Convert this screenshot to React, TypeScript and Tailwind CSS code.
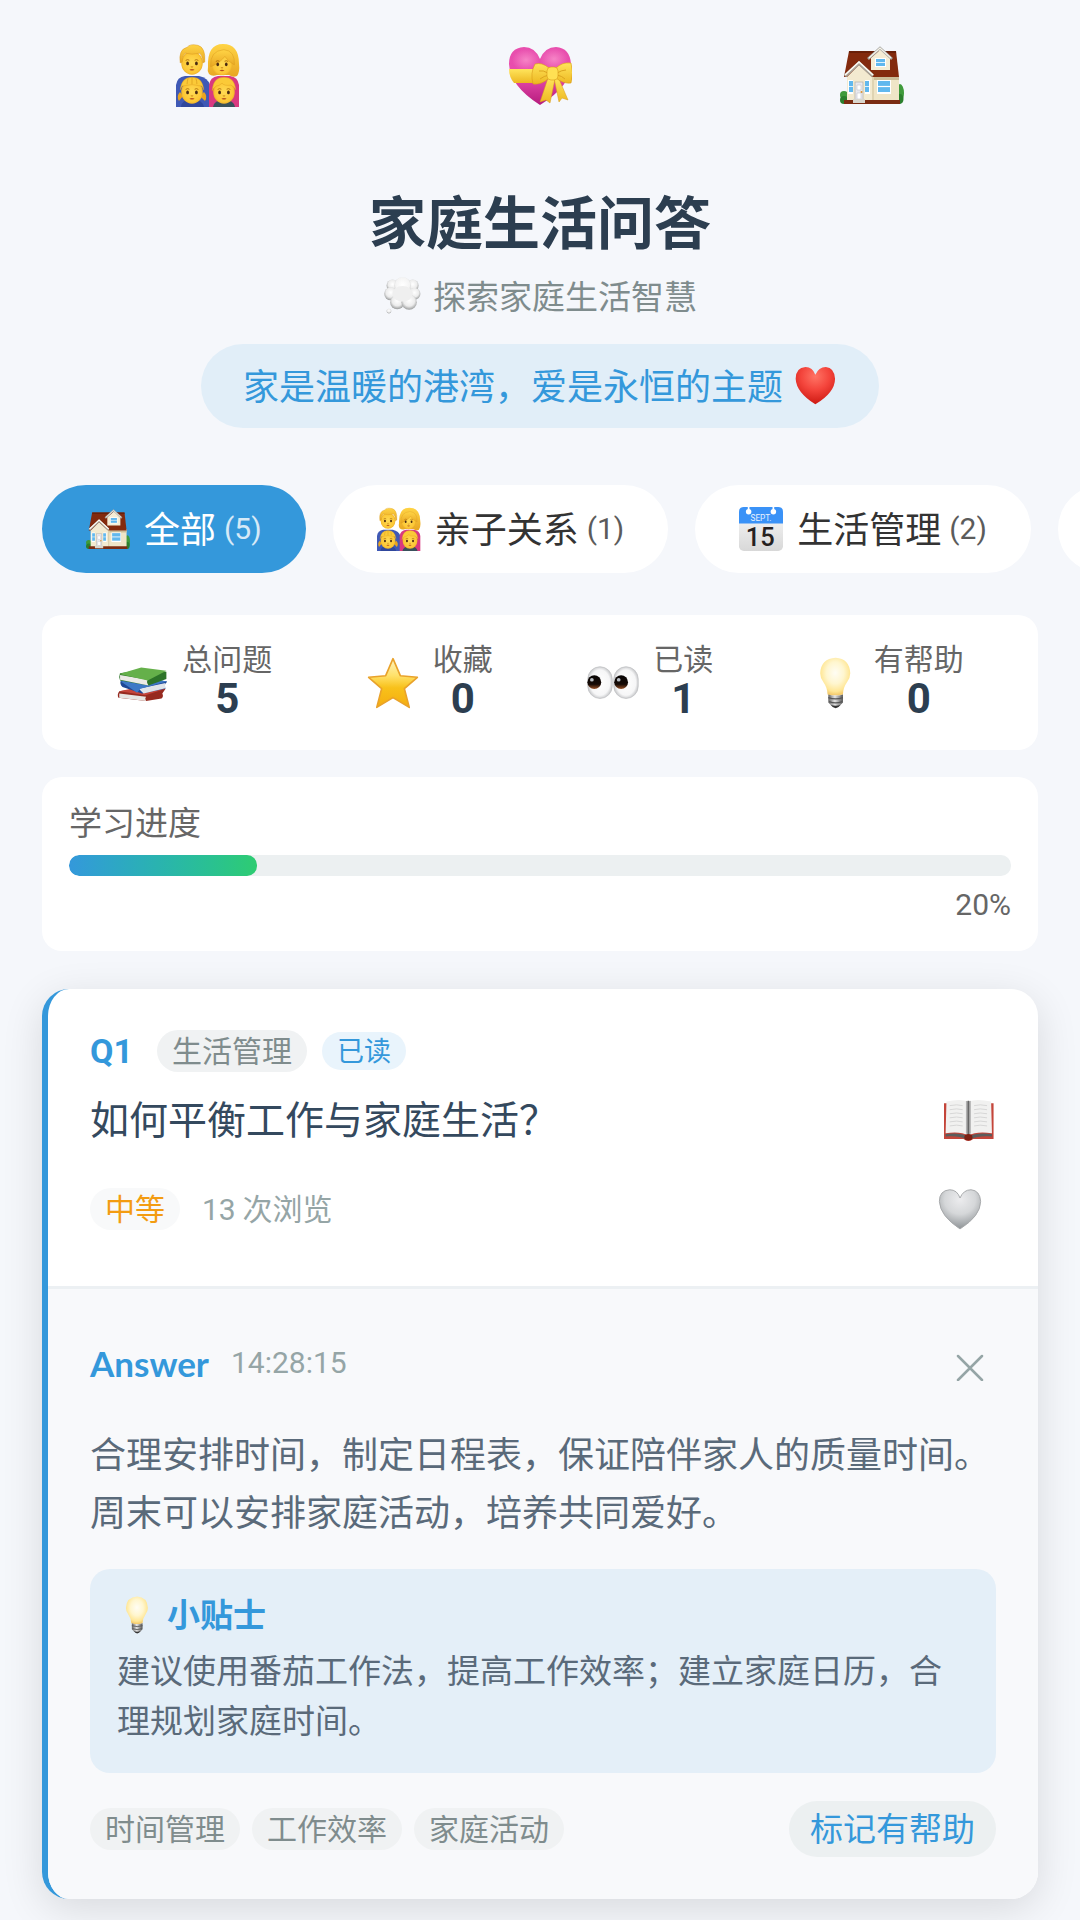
import { useState } from 'react';
import type { ReactNode } from 'react';

type IconProps = { className?: string };

function Face({ x, y, s, children }: { x: number; y: number; s: number; children?: ReactNode }) {
  return (
    <g transform={`translate(${x} ${y}) scale(${s})`}>
      <ellipse cx="0" cy="1" rx="11" ry="12" fill="url(#skin)" />
      {children}
      <ellipse cx="-4.5" cy="1.500" rx="1.400" ry="1.900" fill="#4a2b12" />
      <ellipse cx="4.5" cy="1.500" rx="1.400" ry="1.900" fill="#4a2b12" />
      <path d="M-6.5-1.6q2-1.5 3.8-.2M6.5-1.6q-2-1.5-3.8-.2" stroke="#a8690b" strokeWidth=".9" fill="none" />
      <path d="M-1.2 4.8q1.2.8 2.4 0" stroke="#c98413" strokeWidth="1" fill="none" />
      <path d="M-2.600 7.600q2.600-1 5.200 0q-2.600 2.400-5.200 0z" fill="#b8501c" />
    </g>
  );
}

function FamilyIcon({ className }: IconProps) {
  return (
    <svg viewBox="0 0 64 64" className={className} aria-hidden="true">
      <defs>
        <radialGradient id="skin" cx=".5" cy=".5" r=".6">
          <stop offset="0" stopColor="#ffdb55" />
          <stop offset=".7" stopColor="#fcc735" />
          <stop offset="1" stopColor="#dc981d" />
        </radialGradient>
        <linearGradient id="hair" x1="0" y1="0" x2="0" y2="1">
          <stop offset="0" stopColor="#ffd445" />
          <stop offset="1" stopColor="#e8a622" />
        </linearGradient>
      </defs>
      <path d="M0 64V42q1-8 9-9h14q9 2 11 9v22z" fill="#3f59b5" />
      <path d="M33 64V42q1-8 9-9h12q8 1 9 9v22z" fill="#d93a80" />
      <path d="M32 24Q31 1 47 1q16 0 16 20 1 8-2 12-4 2-8-1H41q-5 2-8-1-2-3-1-7z" fill="url(#hair)" />
      <Face x={46} y={20} s={0.95}>
        <path d="M-12 4Q-13-13 2-14q12 1 11 16Q7-1 3-7q-5 7-15 11z" fill="url(#hair)" stroke="#d9991c" strokeWidth=".5" />
      </Face>
      <Face x={16} y={19} s={0.98}>
        <path d="M-12 1Q-14-13-5-15q3-4 11-2 8 2 7 17l-2 1q0-7-3-10-8 2-15 0-3 3-3 9z" fill="url(#hair)" stroke="#d9991c" strokeWidth=".5" />
      </Face>
      <path d="M5 64q1-8 11-8t12 8z" fill="#2f479c" />
      <path d="M37 64q1-7 11-7t11 7z" fill="#39515c" />
      <path d="M4 49q-4 4-1 9l4-5zM28 49q4 4 1 9l-5-5z" fill="#eaa51e" />
      <Face x={16} y={48} s={0.98}>
        <path d="M-12-1Q-11-14 0-14q11 0 12 13l-2-4Q0-8-10-5z" fill="#fbca38" stroke="#d9991c" strokeWidth=".4" />
        <path d="M-4-13q-1 3-1 6M0-14v7M4-13q1 3 1 6" stroke="#d99a1c" strokeWidth=".7" fill="none" />
      </Face>
      <Face x={48} y={48} s={0.98}>
        <path d="M-12-1Q-11-14 0-14q11 0 12 13-2-4-5-5-7 1-9-2-3 3-6 3-3 2-4 5z" fill="#fbca38" stroke="#d9991c" strokeWidth=".4" />
      </Face>
    </svg>
  );
}

function GiftHeartIcon({ className }: IconProps) {
  return (
    <svg viewBox="0 0 64 64" className={className} aria-hidden="true">
      <defs>
        <linearGradient id="pinkHeart" x1="0" y1="0" x2="0" y2="1">
          <stop offset="0" stopColor="#e84fae" />
          <stop offset=".5" stopColor="#e84cad" />
          <stop offset="1" stopColor="#b51b7d" />
        </linearGradient>
        <radialGradient id="pinkShine">
          <stop offset="0" stopColor="#f684c6" />
          <stop offset="1" stopColor="#f684c6" stopOpacity="0" />
        </radialGradient>
        <linearGradient id="ribbon" x1="0" y1="0" x2="0" y2="1">
          <stop offset="0" stopColor="#ffe55c" />
          <stop offset="1" stopColor="#edb721" />
        </linearGradient>
      </defs>
      <path d="M32 62Q2 43 1 21 1 5 16 4q11 0 16 12Q37 4 48 4q14 1 15 17 0 22-31 41z" fill="url(#pinkHeart)" />
      <ellipse cx="18" cy="17" rx="14" ry="11" fill="url(#pinkShine)" />
      <ellipse cx="46" cy="16" rx="14" ry="11" fill="url(#pinkShine)" />
      <path d="M1 26h26v14H6Q1 34 1 26z" fill="url(#ribbon)" />
      <path d="M40 35l-8 24 6-2 4 3 5-24zM46 35l5 24 3-4 6 2-9-21z" fill="url(#ribbon)" stroke="#d99a18" strokeWidth=".5" />
      <path d="M41 25Q34 19 27 21q-5 9-2 20 9 1 16-6zM48 25q6-6 15-5 3 9 0 20-8 1-15-5z" fill="url(#ribbon)" stroke="#d99a18" strokeWidth=".6" />
      <path d="M40 30q-5-3-9-2M41 32q-5 1-9 4M49 30q5-3 9-3M49 32q5 1 8 4" stroke="#dda51f" strokeWidth="1" fill="none" />
      <rect x="39" y="24" width="11" height="13" rx="4" fill="#ffe053" stroke="#d99a18" strokeWidth=".6" />
    </svg>
  );
}

function HouseIcon({ className }: IconProps) {
  return (
    <svg viewBox="0 -2 64 64" className={className} aria-hidden="true">
      <circle cx="4" cy="50" r="4" fill="#3f9a3b" />
      <circle cx="4" cy="55" r="4" fill="#2b7f2d" />
      <ellipse cx="60" cy="48" rx="4" ry="9" fill="#3f9a3b" />
      <ellipse cx="60" cy="54" rx="3.500" ry="5" fill="#2b7f2d" />
      <path d="M7 30h52v29H7z" fill="#efe5c7" />
      <path d="M34 32h25v3H34z" fill="#cbbd98" />
      <path d="M9 6h47l3 26H4z" fill="#832a0d" />
      <path d="M9 6h47v2H9z" fill="#692009" />
      <path d="M31 13l10-9 9 9v12H31z" fill="#f5edd5" />
      <path d="M28 14L40 3l12 11" fill="none" stroke="#a9a9a4" strokeWidth="2.600" />
      <path d="M29 13L40 3l11 10" fill="none" stroke="#f7f4ea" strokeWidth="1.200" />
      <path d="M35 13h11v9H35z" fill="#fff" />
      <path d="M36 14h9v7h-9z" fill="#61b8ee" />
      <path d="M36 17.500h9" stroke="#fff" strokeWidth=".8" />
      <path d="M7 32l12-12 13 12v27H7z" fill="#f3ead0" />
      <path d="M5 31l14-13 14 13" fill="none" stroke="#aaa69b" strokeWidth="3.200" />
      <path d="M5 30l14-13 14 13" fill="none" stroke="#fffdf5" strokeWidth="1.600" />
      <path d="M33 32v26" stroke="#cfc29d" strokeWidth="1" />
      <path d="M8 35h5v14H8zM25 35h5v14h-5z" fill="#fff" />
      <path d="M9 36h4v11H9zM25 36h4v11h-4z" fill="#61b8ee" />
      <path d="M9 41.500h4M25 41.500h4" stroke="#fff" strokeWidth=".8" />
      <rect x="15" y="37" width="8" height="21" fill="#e9e9ee" stroke="#b7b4ad" strokeWidth=".8" />
      <path d="M17 40h4v5h-4zM17 48h4v6h-4z" fill="#fff" stroke="#c3c3cb" strokeWidth=".6" />
      <circle cx="21.500" cy="47" r="1" fill="#d9902e" />
      <path d="M37 35h14v14H37z" fill="#fff" />
      <path d="M38 36h12v11H38z" fill="#61b8ee" />
      <path d="M38 41.500h12" stroke="#fff" strokeWidth="1.200" />
      <path d="M4 55h56v4H4z" fill="#7a2c12" />
      <path d="M13 54h12v4H13z" fill="#d9d6cd" />
    </svg>
  );
}

function ThoughtIcon({ className }: IconProps) {
  return (
    <svg viewBox="0 0 64 64" className={className} aria-hidden="true">
      <defs>
        <radialGradient id="cloud" cx=".5" cy=".4" r=".6">
          <stop offset="0" stopColor="#ffffff" />
          <stop offset=".6" stopColor="#ececec" />
          <stop offset="1" stopColor="#989a9a" />
        </radialGradient>
        <radialGradient id="cloudTop" cx=".5" cy=".45" r=".6">
          <stop offset="0" stopColor="#ffffff" />
          <stop offset=".7" stopColor="#f4f4f4" />
          <stop offset="1" stopColor="#c3c4c4" />
        </radialGradient>
      </defs>
      <g fill="url(#cloud)">
        <circle cx="16" cy="16" r="10" />
        <circle cx="50" cy="16" r="10" />
        <circle cx="13" cy="30" r="11" />
        <circle cx="53" cy="30" r="10" />
        <circle cx="24" cy="44" r="12" />
        <circle cx="44" cy="44" r="13" />
      </g>
      <circle cx="33" cy="16" r="14" fill="url(#cloudTop)" />
      <ellipse cx="33" cy="30" rx="17" ry="13" fill="#efefef" />
      <circle cx="10" cy="59" r="4" fill="url(#cloud)" />
    </svg>
  );
}

function RedHeartIcon({ className }: IconProps) {
  return (
    <svg viewBox="0 0 64 64" className={className} aria-hidden="true">
      <defs>
        <radialGradient id="redHeart" cx=".5" cy=".25" r=".8">
          <stop offset="0" stopColor="#ff7465" />
          <stop offset=".45" stopColor="#f4453c" />
          <stop offset="1" stopColor="#c8130c" />
        </radialGradient>
      </defs>
      <path d="M31 63Q2 45 1 24 1 7 16 6q11 0 15 12Q36 6 47 6q13 1 14 18 0 21-30 39z" fill="url(#redHeart)" />
    </svg>
  );
}

function WhiteHeartIcon({ className }: IconProps) {
  return (
    <svg viewBox="0 0 64 64" className={className} aria-hidden="true">
      <defs>
        <radialGradient id="whiteHeart" cx=".5" cy=".25" r=".75">
          <stop offset="0" stopColor="#ececee" />
          <stop offset=".5" stopColor="#d5d7d9" />
          <stop offset="1" stopColor="#8e9396" />
        </radialGradient>
      </defs>
      <path d="M32 61Q3 42 2 21 2 5 17 4q11 0 15 12Q37 4 48 4q13 1 14 17 0 21-30 40z" fill="url(#whiteHeart)" stroke="#a5a8aa" strokeWidth="1.400" />
    </svg>
  );
}

function CalendarIcon({ className }: IconProps) {
  return (
    <svg viewBox="0 0 64 64" className={className} aria-hidden="true">
      <defs>
        <linearGradient id="paper" x1="0" y1="0" x2="0" y2="1">
          <stop offset="0" stopColor="#fafafa" />
          <stop offset="1" stopColor="#d8d8d8" />
        </linearGradient>
      </defs>
      <rect x="0" y="0" width="64" height="64" rx="7" fill="url(#paper)" />
      <path d="M0 24V7q0-7 7-7h50q7 0 7 7v17z" fill="#3a92f7" />
      <circle cx="14" cy="7" r="4" fill="#fff" />
      <circle cx="50" cy="7" r="4" fill="#fff" />
      <path d="M14 0v7M50 0v7" stroke="#fff" strokeWidth="2.500" />
      <text x="32" y="21" textAnchor="middle" fontSize="12" fill="#e8f3ff" fontFamily="Roboto, sans-serif">SEPT.</text>
      <text x="31" y="56" textAnchor="middle" fontSize="37" fontWeight="500" fill="#26211f" fontFamily="Roboto, sans-serif">15</text>
    </svg>
  );
}

function BooksIcon({ className }: IconProps) {
  return (
    <svg viewBox="-1 0 64 64" className={className} aria-hidden="true">
      <path d="M3 42l29-4 28 1-4 6q2 4-1 6L36 54 2 50q-2-4 1-8z" fill="#962a20" />
      <path d="M3 45l33 4q-2 2 0 5L3 50z" fill="#e7e5e2" />
      <path d="M3 42l32 5 25-8-28-3z" fill="#c5443a" />
      <path d="M5 29l29-3 28 4-3 4q-1 3 1 5l-29 6L7 37q-4-4-2-8z" fill="#1e4795" />
      <path d="M27 39l33-7q-2 3 1 6l-28 7z" fill="#dfe4ea" />
      <path d="M5 30l20 14 4-5 33-9-28-5z" fill="#3d78c6" />
      <path d="M4 20l29-5 28 3v9L39 35 4 29q-2-5 0-9z" fill="#2d7429" />
      <path d="M4 22l34 6q-2 3 1 7L4 28z" fill="#eceae6" />
      <path d="M3 21l27-8 31 4-23 12z" fill="#65b04a" />
    </svg>
  );
}

function StarIcon({ className }: IconProps) {
  return (
    <svg viewBox="0 0 64 64" className={className} aria-hidden="true">
      <defs>
        <linearGradient id="star" x1="0" y1="0" x2="0" y2="1">
          <stop offset="0" stopColor="#fff3c0" />
          <stop offset=".35" stopColor="#ffe169" />
          <stop offset=".6" stopColor="#f8c11a" />
          <stop offset="1" stopColor="#f5ad10" />
        </linearGradient>
      </defs>
      <path d="M32 2l9 21 21 2-16 14 6 23-20-12-20 12 6-23L2 25l21-2z" fill="url(#star)" stroke="#e9a22b" strokeWidth="2" strokeLinejoin="round" />
    </svg>
  );
}

function EyesIcon({ className }: IconProps) {
  return (
    <svg viewBox="0 0 64 64" className={className} aria-hidden="true">
      <defs>
        <radialGradient id="eyeball" cx=".5" cy=".5" r=".5">
          <stop offset="0" stopColor="#ffffff" />
          <stop offset=".8" stopColor="#f6f6f7" />
          <stop offset="1" stopColor="#cfd0d2" />
        </radialGradient>
        <linearGradient id="iris" x1="0" y1="0" x2="0" y2="1">
          <stop offset="0" stopColor="#080504" />
          <stop offset=".65" stopColor="#150a06" />
          <stop offset="1" stopColor="#9a5227" />
        </linearGradient>
      </defs>
      <rect x="1" y="12" width="30" height="39" rx="15" fill="url(#eyeball)" stroke="#c2c3c5" strokeWidth="1" />
      <rect x="33" y="12" width="30" height="39" rx="15" fill="url(#eyeball)" stroke="#c2c3c5" strokeWidth="1" />
      <circle cx="9" cy="31" r="8.500" fill="url(#iris)" />
      <circle cx="42" cy="31" r="8.500" fill="url(#iris)" />
      <circle cx="6" cy="28" r="2.300" fill="#b8bec4" />
      <circle cx="39" cy="28" r="2.300" fill="#b8bec4" />
    </svg>
  );
}

function BulbIcon({ className }: IconProps) {
  return (
    <svg viewBox="-1 0 64 64" className={className} aria-hidden="true">
      <defs>
        <radialGradient id="glow" cx=".5" cy=".4" r=".58">
          <stop offset="0" stopColor="#fffdf4" />
          <stop offset=".5" stopColor="#fff6cf" />
          <stop offset=".85" stopColor="#ffe694" />
          <stop offset="1" stopColor="#f4cc70" />
        </radialGradient>
        <linearGradient id="socket" x1="0" y1="0" x2="1" y2="0">
          <stop offset="0" stopColor="#626262" />
          <stop offset=".45" stopColor="#e4e4e4" />
          <stop offset="1" stopColor="#555555" />
        </linearGradient>
      </defs>
      <path d="M23 46Q23 38 18 31q-4-5-4-11Q15 2 33 1q17 1 18 19 0 6-4 11-5 7-5 15-10 3-19 0z" fill="url(#glow)" />
      <path d="M24 46q9 3 18 0v10l-4 4q-5 5-10 0l-4-4z" fill="url(#socket)" />
      <path d="M24 50q9 3 18 0M25 55q8 3 16 0" stroke="#565656" strokeWidth="1.500" fill="none" />
      <path d="M27 59q6 2 12 0-6 8-12 0z" fill="#333" />
    </svg>
  );
}

function OpenBookIcon({ className }: IconProps) {
  return (
    <svg viewBox="2 -6 64 64" className={className} aria-hidden="true">
      <path d="M2 9h61v44H38q-6 5-12 0H1z" fill="#c4453a" />
      <path d="M4 47q18-2 28 3 10-5 29-3v3q-18-1-25 3h-8q-6-4-24-3z" fill="#5c5c5c" />
      <path d="M5 7q17-4 27 0v42q-10-6-28-3z" fill="#f1f1f0" />
      <path d="M60 7q-18-4-28 0v42q10-6 29-3z" fill="#f1f1f0" />
      <path d="M29 6l3 1 3-1v40l-3 3-3-3z" fill="#b0b0b0" />
      <path d="M32 6v43" stroke="#666" strokeWidth="2" />
      <path d="M9 12q9-2 16 0M9 17q9-2 16 0M9 22q9-2 16 0M9 27q9-2 16 0M9 32q9-2 16 0M9 37q9-2 16 0M39 12q7-2 16 0M39 17q7-2 16 0M39 22q7-2 16 0M39 27q7-2 16 0M39 32q7-2 16 0M39 37q7-2 16 0" stroke="#d6d6d6" strokeWidth="1.200" fill="none" />
      <ellipse cx="32" cy="51" rx="5" ry="4" fill="#7d1f12" />
    </svg>
  );
}

const categories = [
  { name: '全部', count: 5, Icon: HouseIcon },
  { name: '亲子关系', count: 1, Icon: FamilyIcon },
  { name: '生活管理', count: 2, Icon: CalendarIcon },
];

const stats = [
  { label: '总问题', value: 5, Icon: BooksIcon },
  { label: '收藏', value: 0, Icon: StarIcon },
  { label: '已读', value: 1, Icon: EyesIcon },
  { label: '有帮助', value: 0, Icon: BulbIcon },
];

const tags = ['时间管理', '工作效率', '家庭活动'];

export default function App() {
  const [active, setActive] = useState('全部');
  const progress = 20;

  return (
    <div className="min-h-screen overflow-hidden bg-[#f5f7fb] pb-5 font-['Noto_Sans_CJK_SC',sans-serif] text-[#333]">
      <header className="px-[42px] pt-[43px]">
        <div className="flex justify-around">
          <FamilyIcon className="size-16" />
          <GiftHeartIcon className="size-16" />
          <HouseIcon className="size-16" />
        </div>
        <div className="flex flex-col items-center pt-[72px]">
          <h1 className="text-[57px] leading-[80px] font-bold text-[#2c3e50]">家庭生活问答</h1>
          <p className="mt-[13px] flex items-center gap-3 text-[33px] leading-[46px] text-[#7f8c8d]">
            <ThoughtIcon className="size-[38px]" />
            探索家庭生活智慧
          </p>
          <p className="mt-[26px] flex items-center gap-3 rounded-full bg-[#e1eef8] px-[42px] pt-4 pb-5 text-[36px] leading-[48px] text-[#3498db]">
            家是温暖的港湾，爱是永恒的主题
            <RedHeartIcon className="size-[42px]" />
          </p>
        </div>
      </header>

      <nav className="mt-[57px] flex gap-[27px] overflow-x-auto px-[42px] [scrollbar-width:none]">
        {categories.map(({ name, count, Icon }) => (
          <button
            key={name}
            type="button"
            onClick={() => setActive(name)}
            className={`flex h-[88px] shrink-0 items-center rounded-full px-[44px] text-[36px] leading-[48px] ${
              active === name ? 'bg-[#3498db] text-white' : 'bg-white text-[#333]'
            }`}
          >
            <Icon className="mr-[14px] size-[44px]" />
            <span className="pb-1">{name}</span>
            <span className="ml-2 font-['Roboto',sans-serif] text-[30px] opacity-80">({count})</span>
          </button>
        ))}
        <button type="button" aria-label="更多分类" className="flex h-[88px] shrink-0 items-center rounded-full bg-white px-[44px]">
          <GiftHeartIcon className="size-[44px]" />
        </button>
      </nav>

      <main className="px-[42px]">
        <section className="mt-[42px] flex justify-around rounded-[20px] bg-white p-[27px]">
          {stats.map(({ label, value, Icon }) => (
            <div key={label} className="flex items-center gap-[14px]">
              <Icon className="size-[52px]" />
              <div className="text-center">
                <div className="text-[30px] leading-[30px] text-[#666]">{label}</div>
                <div className="pt-[3px] font-['Roboto',sans-serif] text-[42px] leading-[48px] font-bold text-[#2c3e50]">{value}</div>
              </div>
            </div>
          ))}
        </section>

        <section className="mt-[27px] rounded-[20px] bg-white p-[27px] text-[#666]">
          <h2 className="pb-4 text-[33px] leading-[35px]">学习进度</h2>
          <div
            role="progressbar"
            aria-label="学习进度"
            aria-valuenow={progress}
            className="h-[21px] overflow-hidden rounded-[10px] bg-[#ecf0f1]"
          >
            <div
              className="h-full rounded-[10px] bg-linear-to-r from-[#3498db] to-[#2ecc71]"
              style={{ width: `${progress}%` }}
            />
          </div>
          <div className="mt-[10px] text-right font-['Roboto',sans-serif] text-[30px] leading-[38px]">{progress}%</div>
        </section>

        <article className="mt-[38px] overflow-hidden rounded-[27px] border-l-[6px] border-[#3498db] bg-white shadow-[0_10px_42px_rgba(0,0,0,0.12)]">
          <div className="px-[42px] pt-[38px] pb-[55px]">
            <div className="flex items-center">
              <span className="font-['Roboto',sans-serif] text-[34px] leading-[48px] font-bold text-[#3498db]">Q1</span>
              <span className="ml-6 rounded-full bg-[#f0f2f3] px-[15px] pb-1 text-[30px] leading-[38px] text-[#7f8c8d]">生活管理</span>
              <span className="ml-[15px] rounded-full bg-[#e9f4fc] px-[15px] pb-[2px] text-[27px] leading-[36px] text-[#3498db]">已读</span>
            </div>
            <div className="mt-3 flex items-center justify-between">
              <h3 className="text-[39px] leading-[60px] text-[#34495e]">如何平衡工作与家庭生活？</h3>
              <OpenBookIcon className="size-[52px]" />
            </div>
            <div className="mt-[40px] flex items-center text-[30px] leading-[38px]">
              <span className="rounded-full bg-[#f8f9fa] px-[15px] pb-1 text-[#f39c12]">中等</span>
              <span className="ml-[22px] pb-1 text-[#95a5a6]">
                <span className="font-['Roboto',sans-serif] leading-none">13</span> 次浏览
              </span>
              <button type="button" aria-label="收藏" className="mr-[14px] ml-auto">
                <WhiteHeartIcon className="size-[44px]" />
              </button>
            </div>
          </div>

          <div className="border-t-[3px] border-[#ecf0f3] bg-[#f8f9fb] p-[42px]">
            <div className="flex items-center pt-2">
              <span className="font-['Lato',sans-serif] text-[35px] leading-[48px] font-bold text-[#3498db]">Answer</span>
              <time className="ml-[22px] font-['Roboto',sans-serif] text-[30px] leading-[48px] text-[#95a5a6]">14:28:15</time>
              <button type="button" aria-label="关闭" className="mr-3 ml-auto pt-2">
                <svg viewBox="0 0 28 28" className="size-7" fill="none" stroke="#95a5a6" strokeWidth="2.500" strokeLinecap="round" aria-hidden="true">
                  <path d="M2 3l24 24M26 3L2 27" />
                </svg>
              </button>
            </div>
            <p className="mt-[36px] text-[36px] leading-[58px] text-[#5a6a7a]">
              合理安排时间，制定日程表，保证陪伴家人的质量时间。周末可以安排家庭活动，培养共同爱好。
            </p>
            <section className="mt-[30px] rounded-[20px] bg-[#e4eff8] p-[27px]">
              <h4 className="flex items-center gap-3 text-[33px] leading-[32px] font-bold text-[#3498db]">
                <BulbIcon className="size-[38px]" />
                <span className="pb-1">小贴士</span>
              </h4>
              <p className="mt-[10px] pb-[2px] text-[33px] leading-[50px] text-[#5a6a7a]">
                建议使用番茄工作法，提高工作效率；建立家庭日历，合理规划家庭时间。
              </p>
            </section>
            <div className="mt-7 flex items-center justify-between">
              <ul className="flex gap-3">
                {tags.map((tag) => (
                  <li key={tag} className="rounded-full bg-[#f0f2f3] px-[15px] pb-1 text-[30px] leading-[38px] text-[#7f8c8d]">
                    {tag}
                  </li>
                ))}
              </ul>
              <button type="button" className="rounded-full bg-[#ecf0f1] px-[21px] pt-1 pb-2 text-[33px] leading-[44px] text-[#3498db]">
                标记有帮助
              </button>
            </div>
          </div>
        </article>
      </main>
    </div>
  );
}
